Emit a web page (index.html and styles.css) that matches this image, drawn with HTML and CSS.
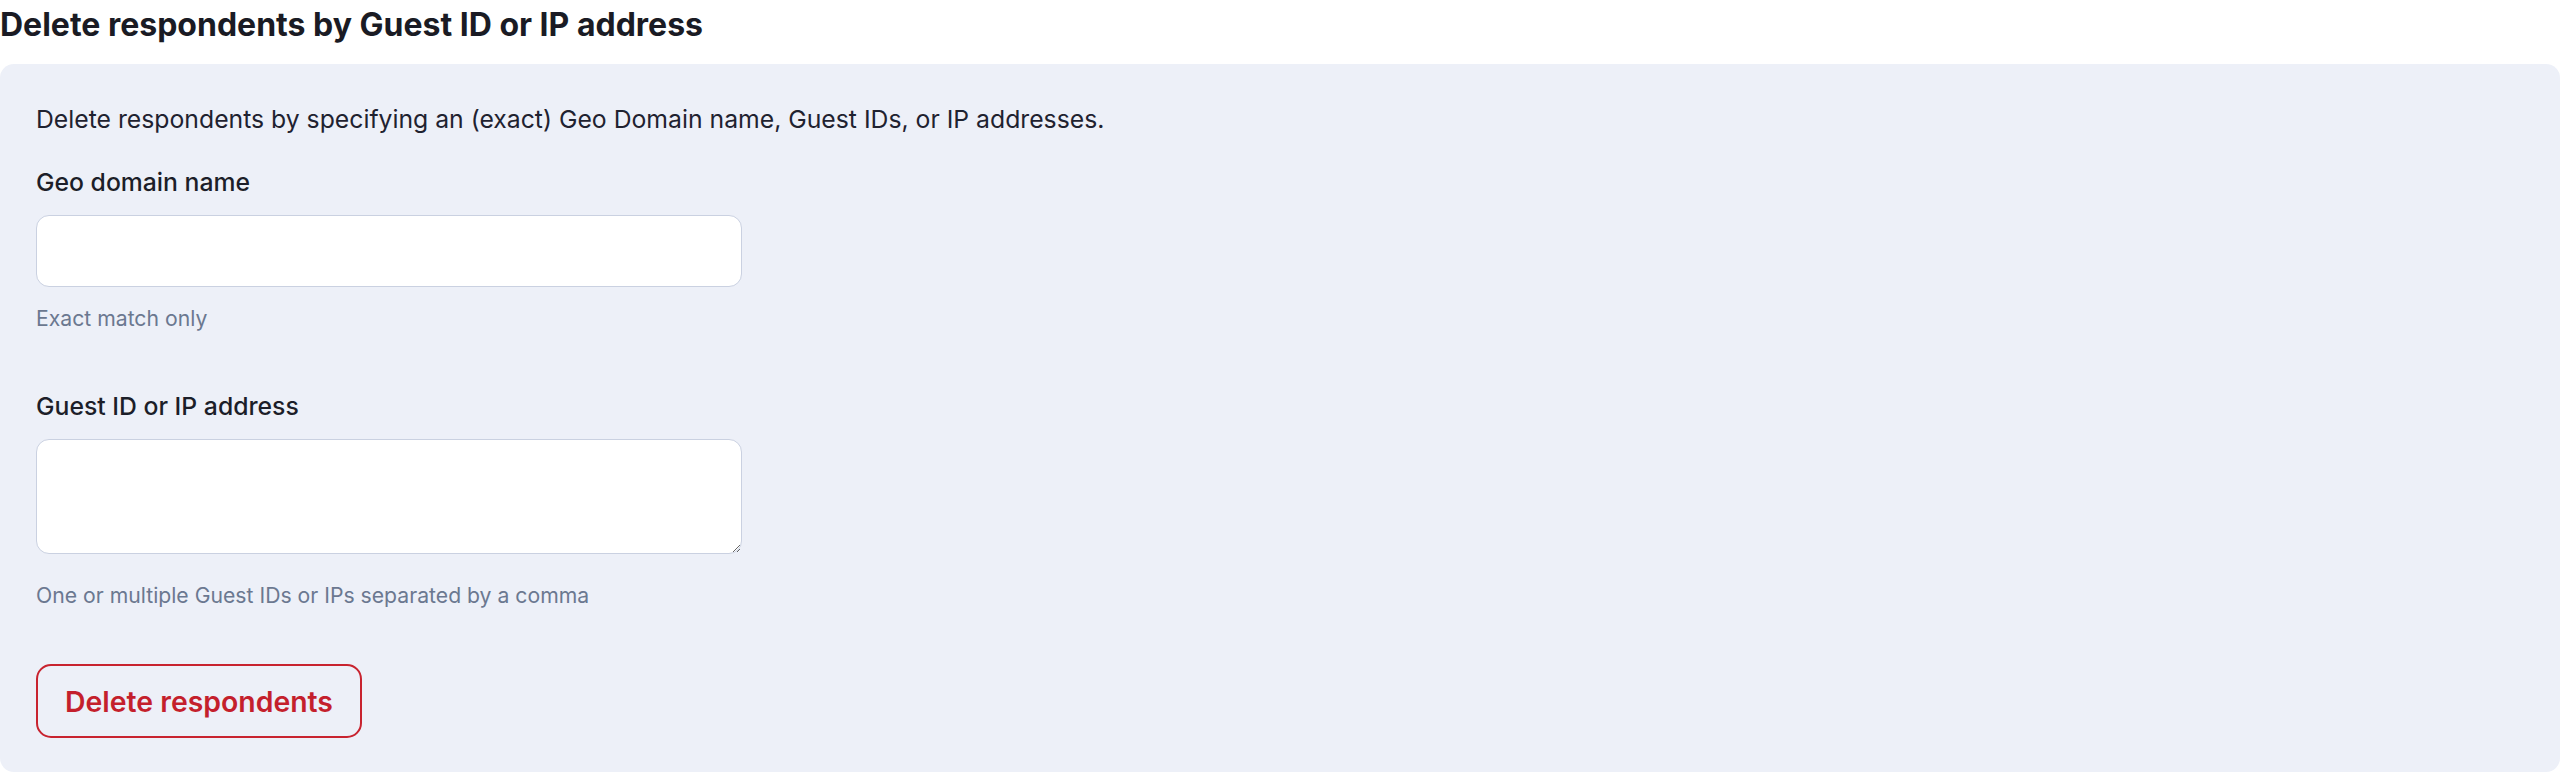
FILE: index.html
```html
<!DOCTYPE html>
<html lang="en">
<head>
<meta charset="utf-8">
<title>Delete respondents</title>
<link rel="stylesheet" href="styles.css">
</head>
<body>
<h2 class="title">Delete respondents by Guest ID or IP address</h2>
<section class="panel">
  <p class="intro">Delete respondents by specifying an (exact) Geo Domain name, Guest IDs, or IP addresses.</p>
  <div class="field field-first">
    <label class="label" for="geo">Geo domain name</label>
    <input class="input" id="geo" type="text">
    <p class="hint">Exact match only</p>
  </div>
  <div class="field field-second">
    <label class="label" for="ids">Guest ID or IP address</label>
    <textarea class="textarea" id="ids"></textarea>
    <p class="hint">One or multiple Guest IDs or IPs separated by a comma</p>
  </div>
  <button class="btn-danger" type="button">Delete respondents</button>
</section>
</body>
</html>
```
FILE: styles.css
```css
* { box-sizing: border-box; }
html, body { margin: 0; padding: 0; background: #ffffff; }
body {
  font-family: Inter, "Noto Sans", "Liberation Sans", sans-serif;
  color: #1c1e29;
  width: 2560px;
}
.title {
  margin: 0;
  padding-top: 5px;
  font-size: 32px;
  line-height: 40px;
  font-weight: 700;
  color: #1a1b24;
}
.panel {
  margin-top: 19px;
  background: #edf0f8;
  border-radius: 14px;
  padding: 37px 36px 34px;
  display: flex;
  flex-direction: column;
  align-items: flex-start;
}
.intro {
  margin: 0;
  font-size: 24.75px;
  line-height: 36px;
  color: #1f2230;
}
.field { display: flex; flex-direction: column; align-items: flex-start; }
.field-first { margin-top: 27px; }
.field-second { margin-top: 55px; }
.label {
  font-size: 24.75px;
  line-height: 36px;
  font-weight: 500;
  color: #1c1e29;
}
.input, .textarea {
  display: block;
  width: 706px;
  margin-top: 15px;
  background: #ffffff;
  border: 1.8px solid #cad1e1;
  border-radius: 13px;
  font-family: inherit;
  font-size: 24px;
  outline: none;
}
.input { height: 72px; }
.textarea { height: 115px; resize: vertical; }
.hint {
  margin: 16px 0 0;
  font-size: 21.2px;
  line-height: 30px;
  color: #6b7890;
}
.field-second .hint { margin-top: 26px; }
.btn-danger {
  margin-top: 54px;
  width: 326px;
  height: 74px;
  background: transparent;
  border: 2px solid #c8232f;
  border-radius: 15px;
  color: #c41f2c;
  font-family: inherit;
  font-size: 28.4px;
  font-weight: 600;
  cursor: pointer;
}
```
